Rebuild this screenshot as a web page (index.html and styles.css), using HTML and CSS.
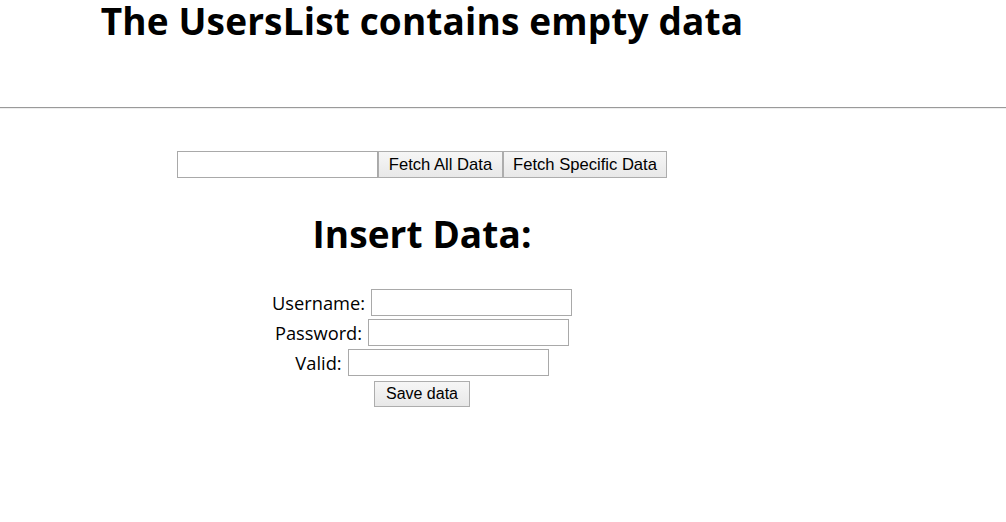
FILE: index.html
```html
<!DOCTYPE html>
<html>
<head>
<meta charset="utf-8">
<link rel="stylesheet" href="styles.css">
</head>
<body>
<header class="top">
  <h1 class="title">The UsersList contains empty data</h1>
</header>
<hr class="divider">
<main class="page">
  <div class="fetch-row">
    <input class="field fetch-field" type="text">
    <button class="btn btn-all">Fetch All Data</button>
    <button class="btn btn-specific">Fetch Specific Data</button>
  </div>
  <h2 class="subtitle">Insert Data:</h2>
  <form class="insert-form">
    <div class="row"><label class="lbl">Username:</label><input class="field" type="text"></div>
    <div class="row"><label class="lbl">Password:</label><input class="field" type="text"></div>
    <div class="row"><label class="lbl">Valid:</label><input class="field" type="text"></div>
    <div class="row save-row"><button class="btn btn-save" type="button">Save data</button></div>
  </form>
</main>
</body>
</html>
```
FILE: styles.css
```css
html, body {
  margin: 0;
  padding: 0;
  background: #fff;
  color: #000;
}
body {
  font-family: "Open Sans", "Noto Sans", sans-serif;
}
.top {
  width: 844px;
  display: flex;
  justify-content: center;
  height: 107px;
}
.title {
  margin: 0;
  font-size: 37px;
  line-height: 42px;
  font-weight: 700;
  letter-spacing: 0.15px;
}
.divider {
  margin: 0;
  border: 0;
  border-top: 1px solid #9a9a9a;
  border-bottom: 1px solid #eeeeee;
  height: 0;
}
.page {
  width: 844px;
  display: flex;
  flex-direction: column;
  align-items: center;
}
.fetch-row {
  margin-top: 42px;
  display: flex;
  height: 27px;
}
.field {
  box-sizing: border-box;
  width: 201px;
  height: 27px;
  border: 1px solid #a9a9a9;
  background: #fff;
  margin: 0;
  padding: 0 4px;
  font-size: 15px;
}
.btn {
  box-sizing: border-box;
  height: 27px;
  border: 1px solid #adadad;
  background: linear-gradient(#f6f6f6, #e8e8e8);
  font-family: "Liberation Sans", Arial, sans-serif;
  font-size: 16.6px;
  color: #000;
  padding: 0 6px;
  margin: 0;
}
.btn-all { width: 125px; }
.btn-specific { width: 164px; }
.subtitle {
  margin: 32px 0 0 0;
  font-size: 37px;
  line-height: 48px;
  font-weight: 700;
  letter-spacing: 0.1px;
}
.insert-form {
  margin-top: 31px;
  display: flex;
  flex-direction: column;
  align-items: center;
  gap: 3px;
}
.row {
  display: flex;
  align-items: center;
  gap: 6px;
  height: 27px;
}
.lbl {
  font-size: 18.3px;
  line-height: 27px;
}
.save-row {
  margin-top: 1px;
}
.btn-save {
  width: 96px;
  height: 26px;
  font-size: 16px;
}
```
